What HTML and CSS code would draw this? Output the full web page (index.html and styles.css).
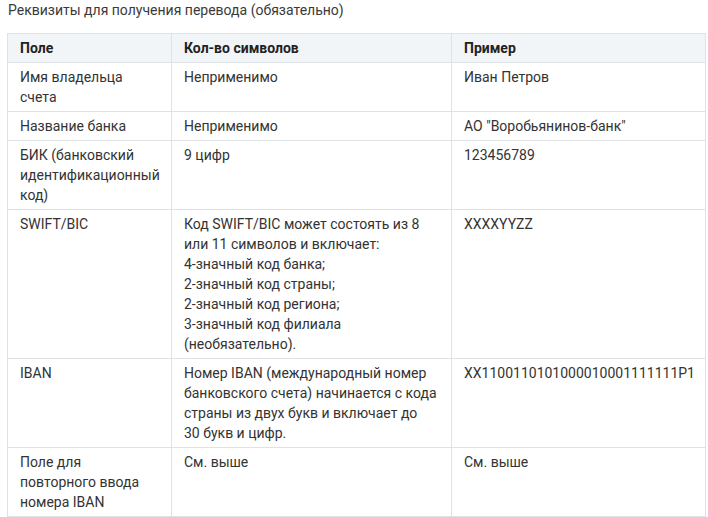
FILE: index.html
```html
<!DOCTYPE html>
<html lang="ru">
<head>
<meta charset="utf-8">
<link rel="stylesheet" href="styles.css">
</head>
<body>
<div class="page">
  <h2 class="title">Реквизиты для получения перевода (обязательно)</h2>
  <table class="req">
    <colgroup>
      <col class="c1"><col class="c2"><col class="c3">
    </colgroup>
    <thead>
      <tr><th>Поле</th><th>Кол-во символов</th><th>Пример</th></tr>
    </thead>
    <tbody>
      <tr><td>Имя владельца счета</td><td>Неприменимо</td><td>Иван Петров</td></tr>
      <tr><td>Название банка</td><td>Неприменимо</td><td>АО "Воробьянинов-банк"</td></tr>
      <tr><td>БИК (банковский идентификационный код)</td><td>9 цифр</td><td>123456789</td></tr>
      <tr><td>SWIFT/BIC</td><td>Код SWIFT/BIC может состоять из 8 или 11 символов и включает:<br>4-значный код банка;<br>2-значный код страны;<br>2-значный код региона;<br>3-значный код филиала (необязательно).</td><td>XXXXYYZZ</td></tr>
      <tr><td>IBAN</td><td>Номер IBAN (международный номер банковского счета) начинается с кода страны из двух букв и включает до 30&nbsp;букв и цифр.</td><td>XX1100110101000010001111111P1</td></tr>
      <tr><td>Поле для повторного ввода номера IBAN</td><td>См. выше</td><td>См. выше</td></tr>
    </tbody>
  </table>
</div>
</body>
</html>
```
FILE: styles.css
```css
html, body {
  margin: 0;
  padding: 0;
  background: #ffffff;
}
body {
  font-family: Roboto, "Liberation Sans", Arial, sans-serif;
  font-size: 14px;
  line-height: 20px;
  color: #333333;
}
.page {
  padding: 0 0 0 7px;
}
.title {
  margin: 0 0 13px 1px;
  font-size: 14px;
  font-weight: 400;
  line-height: 20px;
  color: #3a3a3a;
}
.req {
  border-collapse: collapse;
  table-layout: fixed;
  width: 698px;
}
.c1 { width: 164px; }
.c2 { width: 280px; }
.c3 { width: 254px; }
.req th,
.req td {
  border: 1px solid #dfe2e6;
  padding: 4px 12px 4px 12px;
  text-align: left;
  vertical-align: top;
}
.req th {
  background: #f2f5f8;
  font-weight: 700;
  color: #222222;
}
```
